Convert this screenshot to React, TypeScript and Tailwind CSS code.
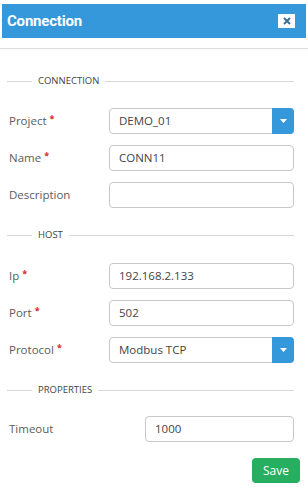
export default function App() {
  return (
    <div className="w-[308px] h-[492px] bg-white overflow-hidden pt-[4px]" style={{ fontFamily: '"Open Sans", sans-serif' }}>
      {/* header */}
      <div className="mx-[2px] h-[34px] bg-[#3498db] flex items-center justify-between pl-[5px] pr-[11px]">
        <h1 className="text-white text-[15px] font-bold tracking-[-0.2px]" style={{ fontFamily: 'Roboto, sans-serif' }}>Connection</h1>
        <button className="w-[17px] h-[14px] bg-white flex items-center justify-center">
          <svg width="8" height="8" viewBox="0 0 8 8">
            <path d="M1 1L7 7M7 1L1 7" stroke="#3d6f99" strokeWidth="2" />
          </svg>
        </button>
      </div>
      <div className="mt-[10px] h-px bg-[#dcdcdc]" />

      <div className="pl-[7px] pr-[14px]">
        <Legend title="CONNECTION" className="mt-[27px]" />
        <div className="mt-[22px] flex flex-col gap-[11px]">
          <Row label="Project" required>
            <Select value="DEMO_01" />
          </Row>
          <Row label="Name" required>
            <Input value="CONN11" />
          </Row>
          <Row label="Description">
            <Input value="" />
          </Row>
        </div>

        <Legend title="HOST" className="mt-[22px]" />
        <div className="mt-[23px] flex flex-col gap-[11px]">
          <Row label="Ip" required>
            <Input value="192.168.2.133" />
          </Row>
          <Row label="Port" required>
            <Input value="502" />
          </Row>
          <Row label="Protocol" required>
            <Select value="Modbus TCP" />
          </Row>
        </div>

        <Legend title="PROPERTIES" className="mt-[22px]" />
        <div className="mt-[21px] flex items-center">
          <label className="w-[138px] pl-[2px] text-[11.5px] text-[#5c5c5c]">Timeout</label>
          <Input value="1000" />
        </div>

        <div className="mt-[16px] flex justify-end -mr-[6px]">
          <button className="h-[25px] w-[48px] rounded-[4px] bg-[#27ae60] text-white text-[12px]">Save</button>
        </div>
      </div>
    </div>
  )
}

function Legend({ title, className }: { title: string; className?: string }) {
  return (
    <div className={`flex items-center h-[10px] ${className ?? ''}`}>
      <div className="w-[25px] h-px bg-[#d6d6d6]" />
      <span className="px-[6px] text-[9.5px] text-[#444] leading-none">{title}</span>
      <div className="flex-1 h-px bg-[#d6d6d6]" />
    </div>
  )
}

function Row({ label, required, children }: { label: string; required?: boolean; children: React.ReactNode }) {
  return (
    <div className="flex items-center">
      <label className="w-[102px] pl-[2px] text-[11.5px] text-[#5c5c5c] flex items-start">
        {label}
        {required && <span className="text-[#d9262c] ml-[3px] text-[9px] font-bold leading-none mt-[2px]">*</span>}
      </label>
      {children}
    </div>
  )
}

function Input({ value }: { value: string }) {
  return (
    <div className="flex-1 h-[26px] border border-[#c8c8c8] rounded-[4px] px-[9px] flex items-center text-[11.5px] text-[#444]">
      {value}
    </div>
  )
}

function Select({ value }: { value: string }) {
  return (
    <div className="flex-1 h-[26px] border border-[#c8c8c8] rounded-[4px] flex items-stretch text-[11.5px] text-[#444]">
      <div className="flex-1 px-[9px] flex items-center">{value}</div>
      <div className="w-[22px] -my-px -mr-px bg-[#3498db] rounded-r-[4px] flex items-center justify-center">
        <svg width="7" height="4" viewBox="0 0 7 4">
          <path d="M0 0H7L3.5 4Z" fill="white" />
        </svg>
      </div>
    </div>
  )
}
